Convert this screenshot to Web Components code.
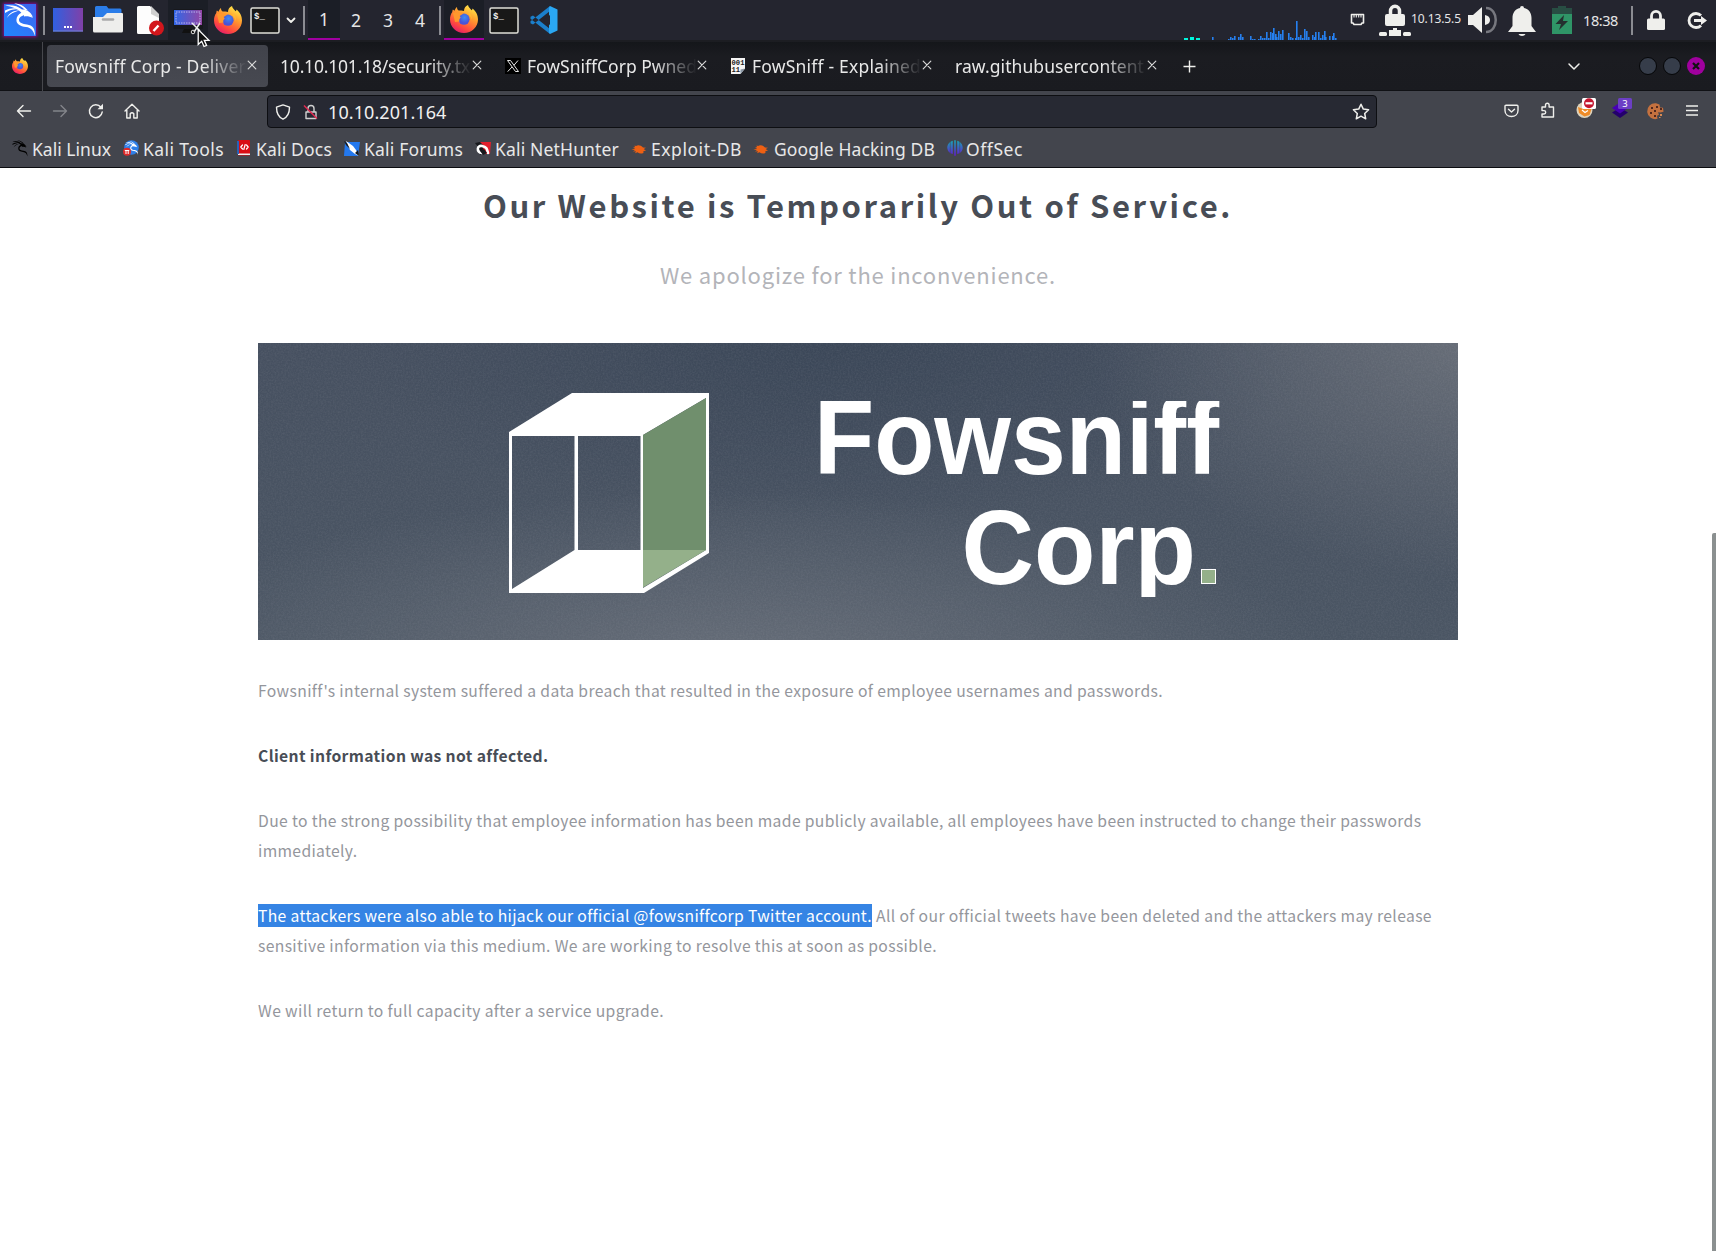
<!DOCTYPE html>
<html lang="en">
<head>
<meta charset="utf-8">
<title>Fowsniff Corp - Delivering Solutions</title>
<style>
html,body{margin:0;height:100%;overflow:hidden;background:#fff}
</style>
</head>
<body>
<desktop-screen></desktop-screen>
<script>
const UI = '"Noto Sans","Open Sans",sans-serif';
const define = (name, html) => customElements.define(name, class extends HTMLElement {
  constructor(){ super(); this.attachShadow({mode:'open'}).innerHTML = html; }
});

/* Single line of text whose letter spacing is set so that it fills its w attribute */
customElements.define('fit-text', class extends HTMLElement {
  constructor(){
    super();
    this.attachShadow({mode:'open'}).innerHTML =
      '<style>:host{display:block;flex:none;white-space:pre}span{display:inline-block;font-kerning:normal}</style><span><slot></slot></span>';
  }
  connectedCallback(){
    const w = +this.getAttribute('w'), s = this.shadowRoot.querySelector('span');
    this.style.width = w + 'px';
    requestAnimationFrame(() => this.fit(w, s));
    this.fit(w, s);
  }
  fit(w, s){
    s.style.letterSpacing = '0.001px';
    const n = this.textContent.length, nat = s.getBoundingClientRect().width;
    if (nat) s.style.letterSpacing = ((w - nat) / n).toFixed(4) + 'px';
  }
});

const firefox = `<defs><linearGradient id="a" x1=".8" y1="0" x2=".25" y2="1"><stop offset="0" stop-color="#fff14a"/><stop offset=".4" stop-color="#ff9a2e"/><stop offset=".75" stop-color="#ff4a3f"/><stop offset="1" stop-color="#e2196e"/></linearGradient><radialGradient id="b" cx=".55" cy=".35"><stop offset="0" stop-color="#3b8df5"/><stop offset="1" stop-color="#4a53d6"/></radialGradient></defs>
<path fill="url(#a)" d="M18 0c.3 2.3 2.3 3.400 3.600 5.300.6-.2.900-1 .8-1.700C26 6 28 10.500 28 14.500 28 22 21.800 28 14 28S0 22 0 14.500C0 11.500.8 9 2.300 7c0-.8.1-1.700.6-2.500l1.600 1.300C5 4.500 5.700 3 7 2c-.1 1.700.7 2.900 1.700 3.600 2 .1 3.500-.1 5.300.4C14 3.300 15.500.8 18 0z"/>
<circle cx="14" cy="14.200" r="5.600" fill="url(#b)"/><path fill="#ff982d" d="M3 8c2-1.200 4-1 5.700-.2 1.600-.7 3.600-.3 4.600.9-1 .9-2.800 1.300-3.600 2.300l1 1.800c-1.500 1-1.700 2.200-1.200 3.600L5 17z"/><path fill="#ffbd34" d="M18.500 7c2.600 1.800 4 5 3.400 8.500-.2-2-1.200-4-3-5.500z" opacity=".85"/>`;
const term = `<rect x="1" y="1" width="28" height="25" rx="1.500" fill="#181818" stroke="#deded8" stroke-width="1.500"/><text x="4" y="12" font-family="Liberation Mono,monospace" font-weight="bold" font-size="9" fill="#eee">$_</text>`;
const kaliDragon = `<g fill="#fff"><path d="M1 2.500C8 1.500 14 3 18 6.500c4-.2 8.500 1.800 11 7.500-3-2-5.500-2.500-8-2-3.500.6-6 2.400-6 5 0 3 3.500 3.800 8 4.500 5.500.8 8.500 4 7.800 11.500-1.300-5.500-3.600-8.300-8.800-9-6-.8-9.600-2.800-9.600-7 0-3.400 2-5.700 5-7.300C13.500 5.500 8 3.800 1 2.500z"/><path d="M1 7.500C6 5 10 4.500 16 6c-6 0-10 .8-15 4zM3 15c2-5 6-7.600 13-7.500C9.500 9 6 11 3 15zM10 .5c6 0 10 2.500 14 7l-3-.5C18 3.500 14 1.800 10 .500z"/><path d="M20 11c3.500-.6 7 .6 9 4-3-1.500-6-2-9-1.500z"/></g>`;
const bug = `<path fill="#ee6013" d="M3.500 4.500l1.600.5C6.800 3.700 10 4.200 12 6.500l3 .3-2.300 1.200 2.300 1.700-2.600.2c.3 1.500.2 2-.6 2.300-1.700.6-3.700.3-5.300-.9l-2.500 1 1-2-3 .3 2-1.500L.5 8.500l3.500-1L2 6l2 .2z"/>`;
const L = (s, w=1.3) => `fill="none" stroke="${s}" stroke-width="${w}" stroke-linecap="round" stroke-linejoin="round"`;
const W = '#efefec';
const icons = {
  kali:[40,40,`<defs><linearGradient id="g" x1="0" y1="1" x2="1" y2="0"><stop offset="0" stop-color="#1f86ff"/><stop offset="1" stop-color="#3f63f0"/></linearGradient><filter id="f" x="-.3" y="-.3" width="1.600" height="1.600"><feGaussianBlur stdDeviation="1.600"/></filter></defs><rect x="3" y="3" width="34" height="34" fill="#a800b4" opacity=".75" filter="url(#f)"/><rect x="4" y="4" width="32" height="32" fill="url(#g)"/><g transform="translate(4 3)">${kaliDragon}</g>`],
  desk:[30,24,`<defs><linearGradient id="g"><stop stop-color="#3060e0"/><stop offset="1" stop-color="#8040a8"/></linearGradient></defs><rect width="30" height="23.500" fill="url(#g)"/><path d="M0 23h30" stroke="#6f86d8"/><path fill="#fff" d="M11 18h2v2h-2zM14 18h2v2h-2zM17 18h2v2h-2z"/>`],
  folder:[30,28,`<path fill="#2b7de9" d="M2 1.500A1.500 1.500 0 013.500 0h10l2 2.500H27A1.500 1.500 0 0128.500 4v8H2z"/><path fill="#eeeeec" d="M0 11h10l4-4h15a1 1 0 011 1v17a1.500 1.500 0 01-1.500 1.500h-27A1.500 1.500 0 010 25z"/><path stroke="#aaa" stroke-width="2.500" stroke-linecap="round" d="M10 13.500h10"/>`],
  doc:[28,30,`<path fill="#fdfdfd" d="M0 1.500A1.500 1.500 0 011.500 0H13l9 9v17.500a1.500 1.500 0 01-1.500 1.500h-19A1.500 1.500 0 010 26.500z"/><path fill="#cfcfcf" d="M14 0l8 8v4l-8-4z"/><circle cx="19.500" cy="22" r="7.500" fill="#d3161c"/><path d="M16.500 25l5-5.500" stroke="#fff" stroke-width="2.400"/>`],
  snip:[32,30,`<defs><linearGradient id="g"><stop stop-color="#3068e8"/><stop offset="1" stop-color="#9446a4"/></linearGradient></defs><rect x=".5" y="2" width="29.500" height="20" rx="1" fill="#17181c"/><rect x="1" y="3" width="28" height="15" fill="url(#g)"/><rect x="3" y="5" width="24" height="11" fill="none" stroke="#b9b3ef" stroke-dasharray="1.500 1"/><path fill="#111" d="M11 22h8l2 4H9z"/><path d="M19 16l8 8M27 16l-6 9" stroke="#eee" stroke-width="1.500"/><circle cx="20" cy="25" r="1.800" fill="none" stroke="#ddd"/>`],
  firefox:[28,28,firefox], ffsmall:[16,16,`<g transform="scale(.571)">${firefox}</g>`],
  term:[30,27,term],
  chev:[10,7,`<path ${L(W,1.8)} d="M1.500 1.500L5 5l3.500-3.500"/>`],
  chevw:[14,9,`<path ${L(W,1.5)} d="M2 2l5 5 5-5"/>`],
  code:[28,28,`<path fill="#1b7fcb" d="M20 5L3 18.500l-2.500-1.200v-2L20 0zM20 23L3 9.500.5 10.700v2L20 28z"/><path fill="#2aa7f3" d="M20 0l7.500 3.500v21L20 28l-1-1.500v-25z"/><path fill="#24252f" d="M20 9v10l-6.800-5z"/>`],
  graph:[152,26,''],
  eth:[15,13,`<path ${L(W,1.600)} d="M1.500 1.500h12v8.500h-1.500l-1 1.500H4L3 10H1.500z"/><path stroke="${W}" stroke-width="1.100" d="M4 2v2.500M6.300 2v2.500M8.700 2v2.500M11 2v2.500"/>`],
  vpn:[32,32,`<rect x="6" y="10" width="20" height="12" rx="2" fill="${W}"/><path fill="none" stroke="${W}" stroke-width="3.500" d="M11.500 11V7a4.500 4.800 0 019 0v4"/><rect y="28" width="8" height="4" rx="1.500" fill="${W}"/><rect x="24" y="28" width="8" height="4" rx="1.500" fill="${W}"/><path fill="${W}" d="M14 24h4v2h4v6H10v-6h4z"/>`],
  speaker:[30,28,`<path fill="${W}" d="M0 9h5L14 1v26l-9-8H0z"/><path fill="${W}" d="M17 9q5 1 5 5t-5 5z"/><path fill="none" stroke="#77787f" stroke-width="2.500" d="M18 2c13 0 13 24 0 24"/>`],
  bell:[28,30,`<path fill="${W}" d="M12 2a2 2 0 014 0c5 1 7.500 5 7.500 10v8L28 26H0l4.500-6v-8C4.500 7 7 3 12 2zM10.500 28h7c-1 2.500-6 2.500-7 0z"/>`],
  battery:[20,28,`<path fill="#284d43" d="M6 0h8v2h6v7H0V2h6z"/><path fill="#2f9567" d="M0 8h20v20H0z"/><path fill="#24302f" d="M12 9L3.500 18H9l-2 6 9-9h-5z"/>`],
  lock:[18,20,`<rect y="8.500" width="18" height="11.500" rx="1.500" fill="${W}"/><path fill="none" stroke="${W}" stroke-width="2.800" d="M4.500 10V6a4.500 4.600 0 019 0v4"/>`],
  logout:[20,17,`<path fill="none" stroke="${W}" stroke-width="2.800" d="M14 3.600A7 7 0 1014 13.400"/><path fill="${W}" d="M7 7h7V4l6 4.500-6 4.500v-3H7z"/>`],
  x:[10,10,`<path ${L('#d8d8d8',1.2)} d="M1.200 1.200l7.600 7.600M8.800 1.200L1.200 8.800"/>`],
  plus:[13,13,`<path stroke="${W}" stroke-width="1.400" d="M6.500.5v12M.5 6.500h12"/>`],
  X:[16,16,`<rect width="16" height="16"/><path fill="none" stroke="#fff" stroke-width=".9" d="M2.500 2.500h3l8 11h-3zM13 2.500L9 7.200M7 9l-4.300 4.600"/>`],
  bin:[16,16,`<path fill="#f5f5f5" d="M1 0h14v10.500L10.500 16H1z"/><path fill="#8b97a5" d="M15 10.500L10.500 16v-4.500z"/><g font-family="Liberation Mono,monospace" font-weight="bold" font-size="7.200" fill="#222"><text x="1.500" y="6.800">001</text><text x="1.500" y="13.500">11</text></g>`],
  back:[16,14,`<path ${L(W,1.4)} d="M14.500 7H1.500M7 1.500L1.500 7 7 12.500"/>`],
  fwd:[16,14,`<path ${L('#83858a',1.4)} d="M1.500 7h13M9 1.500L14.500 7 9 12.500"/>`],
  reload:[16,16,`<path ${L(W,1.5)} d="M14.200 9A6.400 6.400 0 1112.900 4.300"/><path fill="${W}" d="M15 .8V6.300H9.500z"/>`],
  home:[16,16,`<path ${L(W,1.4)} d="M1 8L8 1.200 15 8M2.800 7v8h3.400v-4.300q1.800-2 3.600 0V15h3.400V7"/>`],
  shield:[16,16,`<path ${L(W,1.4)} d="M8 .9l6.500 2.300C14.500 9 12.800 13 8 15.200 3.200 13 1.500 9 1.500 3.200z"/>`],
  nolock:[16,16,`<path ${L('#d0d0d0',1.4)} d="M3 8h10v6.500H3zM5 8V4.500a3 3 0 016 0V8"/><path stroke="#e22850" stroke-width="1.500" d="M1 1.500l13 13"/>`],
  star:[18,17,`<path ${L(W,1.5)} d="M9 1.200l2.300 4.900 5.300.7-3.900 3.700 1 5.300L9 13.200l-4.700 2.600 1-5.300L1.400 6.800l5.300-.7z"/>`],
  pocket:[15,14,`<path ${L(W,1.4)} d="M2 1.200h11q1 0 1 1V6.500c0 8-13 8-13 0V2.200q0-1 1-1z"/><path ${L(W,1.4)} d="M4.500 5.200l3 2.800 3-2.800"/>`],
  puzzle:[15,16,`<path ${L(W,1.4)} d="M2 5h3.500V3a1.800 1.800 0 013.600 0v2H13.500v10H2v-3h2a1.600 1.600 0 000-3.400H2z"/>`],
  fox:[20,20,`<circle cx="8.500" cy="12" r="8" fill="#ddd3bd"/><path fill="#ef8b27" d="M2 9l4 1.500L9.500 8l6 3-2 6-5 1.500L3 15z"/><path stroke="#fff" stroke-width="1.200" fill="none" d="M6 12l3 2.500 3-2"/><rect x="6" width="14" height="11" rx="1.500" fill="#fff"/><circle cx="13" cy="5.300" r="5" fill="#c41730"/><rect x="9.500" y="4.200" width="7" height="2.200" fill="#fff"/>`],
  layers:[20,20,`<path fill="#24006c" d="M0 14.500L8 20l8-5.500-8-5z"/><path fill="#4700b5" d="M0 10l8-5.500 8 5.500-8 5.500z"/><rect x="6" width="14" height="11" rx="1.500" fill="#6c3fc5"/><text x="10.200" y="9" font-family="Noto Sans,sans-serif" font-size="9.500" fill="#fff">3</text>`],
  cookie:[16,16,`<path fill="#c4713f" d="M8 .2a8 8 0 101.500 15.600l-.5-3 2-1-1-2.600 2.500.3 3-.8-.5-4-3-.2-.5-3z"/><path fill="#52291e" d="M3 4h2v2H3zM8 3h2v2H8zM6 7h2v2H6zM2 9h2v2H2zM6 12h2v2H6zM12 5h2v2h-2z"/><path fill="#d98a52" d="M12 11h2v2h-2zM11 14h1.500v1H11z"/>`],
  menu:[12,11,`<path stroke="${W}" stroke-width="1.300" d="M0 1h12M0 5.500h12M0 10h12"/>`],
  bKali:[17,16,`<g transform="scale(.5)" style="filter:brightness(0)">${kaliDragon}</g>`],
  bTools:[16,16,`<circle cx="8.500" cy="7.500" r="7.300" fill="#2e7fe8"/><g transform="translate(2 1) scale(.42)">${kaliDragon}</g><circle cx="4" cy="11.800" r="4" fill="#e02a2a"/><path fill="#fff" d="M1.800 10h4.400v1H5.700v3h-1v-3H3.500v3h-1v-3h-.7z"/>`],
  bDocs:[14,16,`<rect x="1" width="12" height="15.500" rx="1" fill="#d90d14"/><rect x="1" y="13.500" width="12" height="1.500" fill="#eee"/><path fill="#2a60b8" d="M0 1h2v13H0z"/><path ${L('#fff',1.2)} d="M5.500 5L3.800 7l1.700 2M9.500 5l1.700 2-1.700 2M8.200 4.500L6.800 9.500"/>`],
  bForums:[16,15,`<path fill="#2378ee" d="M1 1h15l-2 14H0z"/><path fill="#fff" d="M2 0l7 5 3 4 3 6-4-2-5-4-2-4z"/><path fill="#15181e" d="M0 0l3 2 3 6-4-4zM11 12l4 3-1-6z"/>`],
  bHunter:[16,15,`<path fill="#e21f2d" d="M5 1h11l-1 12H5z"/><path fill="#16181c" d="M0 2l5-1 4 4-3 9-4-3 2-4z"/><path ${L('#fff',2.6)} d="M7 12C1 11 2 4 7 5s5 3 6 7"/><path fill="#16181c" d="M5 10l4-2 3 4-4 2z"/>`],
  bug:[16,15,bug],
  offsec:[16,16,`<defs><linearGradient id="g" x2="0" y2="1"><stop stop-color="#16a8b4"/><stop offset="1" stop-color="#6418d0"/></linearGradient></defs><path fill="url(#g)" d="M7.200.2v15.600h1.600V.2zM5.800.7C2 2 0 5 .3 8.200.6 11 2.500 13.500 5.800 14zM10.200.7C14 2 16 5 15.700 8.200 15.400 11 13.500 13.500 10.200 14z"/><path d="M3.300 2v11M12.700 2v11" stroke="#43454d" stroke-width=".5"/>`],
  cursor:[14,20,`<path d="M1.200 1.500v15l3.500-3.200 2.300 5.200 2.600-1.100-2.300-5.100h4.700z" fill="#111" stroke="#fff" stroke-width="1.300"/>`]
};
/* CPU activity bars: [x, height] */
const bars = [[28,3],[44,1],[46,3],[48,2],[50,4],[54,3],[56,6],[58,3],[66,4],[68,1],[70,1],[74,1],[76,4],[78,2],[80,2],[82,8],[84,2],[86,8],[88,7],[89,12],[91,6],[92,3],[94,9],[96,6],[98,10],[104,7],[106,3],[108,2],[111,2],[112,19],[114,3],[116,5],[118,2],[120,11],[122,9],[124,3],[128,5],[130,3],[131,8],[134,8],[136,2],[138,5],[140,9],[141,3],[145,4],[148,4],[149,7],[151,2]];
icons.graph[2] = '<path fill="#00f5dc" d="M0 24h4v2H0zM6 23h4v3H6zM12 24h4v2h-4z"/><path fill="#2680f0" d="' + bars.map(([x,h]) => `M${x} ${26-h}h1.600v${h}h-1.600z`).join('') + '"/>';

customElements.define('ui-icon', class extends HTMLElement {
  constructor(){ super(); this.attachShadow({mode:'open'}); }
  connectedCallback(){
    const [w,h,m] = icons[this.getAttribute('name')];
    this.shadowRoot.innerHTML = `<style>:host{display:block;flex:none;width:${w}px;height:${h}px}svg{display:block;overflow:visible}</style><svg width="${w}" height="${h}" viewBox="0 0 ${w} ${h}" aria-hidden="true">${m}</svg>`;
  }
});
const ic = (n, ml=0, mt=0) => `<ui-icon name="${n}" style="margin-left:${ml}px;margin-top:${mt}px"></ui-icon>`;
const ft = (t, w, ml=0) => `<fit-text w="${w}" style="margin-left:${ml}px">${t}</fit-text>`;

define('task-panel', `<style>
:host{display:flex;box-sizing:border-box;height:42px;background:#24252f;border-bottom:2px solid #1c1d22;justify-content:space-between;font:17.5px/40px ${UI};color:#e6e6e6}
div{display:flex;height:40px;align-items:center}
i{width:2px;height:29px;background:#8b8c92;flex:none}
.cell{justify-content:center;box-sizing:border-box;flex:none}
.on{background:#1b1e26}
.live{border-bottom:2px solid #a000a0}
.ip{font-size:12px;margin-top:-2px}.clock{font-size:14.500px;margin-top:-1px}
</style>
<div>${ic('kali')}<i style="margin-left:3px"></i>${ic('desk',8)}${ic('folder',10)}${ic('doc',14,1)}
<div class="cell on" style="width:40px;margin-left:3px">${ic('snip',1,4)}</div>${ic('firefox',6)}${ic('term',8)}${ic('chev',6)}
<i style="margin-left:7px"></i><div class="cell on live" style="width:32px;margin-left:3px">1</div>
<div class="cell" style="width:32px">2</div><div class="cell" style="width:32px">3</div><div class="cell" style="width:32px">4</div>
<i style="margin-left:3px"></i><div class="cell on live" style="width:40px;margin-left:3px">${ic('firefox')}</div>${ic('term',5)}${ic('code',11)}</div>
<div>${ic('graph',0,14)}${ic('eth',14,-2)}${ic('vpn',14)}<span class="ip">${ft('10.13.5.5',50)}</span>${ic('speaker',7)}${ic('bell',10,2)}${ic('battery',16)}<span class="clock">${ft('18:38',35,11)}</span><i style="margin-left:13px"></i>${ic('lock',14)}${ic('logout',22)}<b style="width:9px"></b></div>`);

customElements.define('browser-tab', class extends HTMLElement {
  constructor(){ super(); this.attachShadow({mode:'open'}); }
  connectedCallback(){
    const icon = this.getAttribute('icon');
    this.shadowRoot.innerHTML = `<style>
:host{display:flex;flex:none;box-sizing:border-box;width:221px;height:42px;margin-right:4px;padding:0 11px 0 8px;align-items:center;border-radius:4px}
:host([active]){background:linear-gradient(#41434b,#474951)}
.t{flex:1;height:42px;overflow:hidden;line-height:43px;-webkit-mask:linear-gradient(90deg,#000 calc(100% - 44px),transparent)}
</style>${icon ? ic(icon) + '<b style="width:6px"></b>' : ''}<div class="t"><fit-text w="${this.getAttribute('w')}">${this.getAttribute('label')}</fit-text></div>${ic('x',0,-2)}`;
  }
});
define('tab-strip', `<style>
:host{display:flex;box-sizing:border-box;height:49px;padding:0 11px 0 12px;align-items:center;background:linear-gradient(#14161a,#1b1c21 30%,#1a1b20);border-bottom:1px solid #101115;font:17.5px ${UI};color:#e8e8e8}
i{width:1px;height:49px;background:#47484d;margin:0 4px 0 14px}
s{flex:1}
.w{box-sizing:border-box;width:18px;height:18px;border-radius:50%;background:#363d4a;border:1px solid #050608;margin-left:6px}
.c{display:flex;align-items:center;justify-content:center;background:#a0009e;border:0}
</style>${ic('ffsmall')}<i></i>
<browser-tab active label="Fowsniff Corp - Deliver" w="191"></browser-tab>
<browser-tab label="10.10.101.18/security.tx" w="190"></browser-tab>
<browser-tab icon="X" label="FowSniffCorp Pwned" w="170"></browser-tab>
<browser-tab icon="bin" label="FowSniff - Explained" w="169"></browser-tab>
<browser-tab label="raw.githubusercontent" w="189"></browser-tab>
${ic('plus',11)}<s></s>${ic('chevw')}<span class="w" style="margin-left:58px"></span><span class="w"></span><span class="w c"><svg width="8" height="8"><path d="M1 1l6 6M7 1L1 7" stroke="#111" stroke-width="2.200"/></svg></span>`);

define('nav-bar', `<style>
:host{display:flex;box-sizing:border-box;height:39px;padding:0 18px 0 16px;align-items:center;background:#43454d;font:18px/30px ${UI};color:#f0f0f0}
.url{display:flex;align-items:center;box-sizing:border-box;width:1110px;height:33px;margin:2px 0 0 127px;padding:0 6px 0 7px;background:#272933;border:1px solid #0d0e12;border-radius:4px}
s{flex:1}
</style>${ic('back')}${ic('fwd',20)}${ic('reload',20)}${ic('home',20)}
<div class="url">${ic('shield')}${ic('nolock',12)}${ft('10.10.201.164',118.5,9)}<s></s>${ic('star')}</div>
<s></s>${ic('pocket')}${ic('puzzle',21,-1)}${ic('fox',21,-6)}${ic('layers',16,-6)}${ic('cookie',16,1)}${ic('menu',22)}`);

const marks = [['bKali','Kali Linux',12,3,79],['bTools','Kali Tools',12,4,81],['bDocs','Kali Docs',13,5,76],['bForums','Kali Forums',12,4,99],['bHunter','Kali NetHunter',12,4,124],['bug','Exploit-DB',12,4,91],['bug','Google Hacking DB',11,5,161],['offsec','OffSec',12,3,57]];
define('bookmarks-bar', `<style>
:host{display:flex;box-sizing:border-box;height:38px;align-items:center;background:#43454d;border-bottom:1px solid #0c0d11;font:17.5px/38px ${UI};color:#e8e8e8}
a{display:flex;align-items:center;flex:none}
</style>${marks.map(([i,t,m,g,w]) => `<a>${ic(i,m,-1)}${ft(t,w,g)}</a>`).join('')}`);

define('corp-banner', `<style>
:host{display:block;width:1200px;height:297px;background:radial-gradient(ellipse 34% 85% at 103% -5%,rgba(115,120,128,.8),rgba(100,105,115,0)),radial-gradient(ellipse 50% 58% at 39% 108%,rgba(112,118,128,.75),rgba(95,102,112,0)),radial-gradient(ellipse 40% 60% at 48% 0,#3b4758,rgba(64,76,92,0)),linear-gradient(#465060,#4a5563)}
svg{display:block}
</style><svg width="1200" height="297" viewBox="258 343 1200 297">
<defs><clipPath id="c"><rect x="800" y="401" width="430" height="196"/></clipPath><filter id="n" x="0" y="0" width="1" height="1"><feTurbulence type="fractalNoise" baseFrequency=".6" numOctaves="2" seed="3"/><feColorMatrix values="0 0 0 0 .5  0 0 0 0 .5  0 0 0 0 .55  .5 0 0 0 -.16"/></filter></defs>
<rect x="258" y="343" width="1200" height="297" filter="url(#n)" opacity=".35"/>
<path fill="#fff" fill-rule="evenodd" d="M509 432L572 393H709V553L644 593H509zM512 436V589L574.500 550V436zM578 436V550H640.500V436zM643 435V550 588L706 550V398z"/>
<path fill="#708f6d" d="M643 435L706 398V550H643z"/><path fill="#94b08a" d="M643 550H706L643 587.500z"/>
<g clip-path="url(#c)" font-family="Liberation Sans,Arial,sans-serif" font-weight="bold" font-size="105" fill="#fff"><text x="814" y="474" textLength="405" lengthAdjust="spacingAndGlyphs">Fowsniff</text><text x="961.500" y="584" textLength="234.500" lengthAdjust="spacingAndGlyphs">Corp</text></g>
<rect x="1201.500" y="569.500" width="14" height="14" fill="#94b08a" stroke="#fff"/></svg>`);

define('page-body', `<style>
:host{display:flex;flex:1;position:relative;flex-direction:column;align-items:center;padding-top:17px;background:#fff;font:15.700px/30px "Noto Sans CJK SC","Noto Sans",sans-serif;color:#94969c}
h1{margin:0;font-size:31px;line-height:40px;color:#484d56;font-weight:700}
h2{margin:34px 0 0;font-size:22px;line-height:30px;font-weight:400;color:#b3b4b9}
corp-banner{margin-top:54px}
article{width:1200px;padding-top:36px}
p{margin:0 0 35px}
p b{color:#484d56}
.row{display:flex}
mark{background:linear-gradient(#3584e4,#3584e4) 0 3px/100% 23px no-repeat;color:#fff}
aside{position:absolute;right:0;top:365px;bottom:0;width:4px;background:#8b9090;border-radius:2px 0 0 0}
</style>
<h1>${ft('Our Website is Temporarily Out of Service.',750)}</h1>
<h2>${ft('We apologize for the inconvenience.',396)}</h2>
<corp-banner></corp-banner>
<article>
<p>${ft("Fowsniff's internal system suffered a data breach that resulted in the exposure of employee usernames and passwords.",905)}</p>
<p><b>${ft('Client information was not affected.',290.5)}</b></p>
<p>${ft('Due to the strong possibility that employee information has been made publicly available, all employees have been instructed to change their passwords',1163.5)}${ft('immediately.',99.5)}</p>
<p><span class="row"><mark>${ft('The attackers were also able to hijack our official @fowsniffcorp Twitter account.',614)}</mark>${ft('All of our official tweets have been deleted and the attackers may release',556,4)}</span>${ft('sensitive information via this medium. We are working to resolve this at soon as possible.',679)}</p>
<p>${ft('We will return to full capacity after a service upgrade.',406)}</p>
</article><aside></aside>`);

define('desktop-screen', `<style>
:host{display:flex;flex-direction:column;width:1716px;height:1251px;position:relative;overflow:hidden}
ui-icon{position:absolute;left:197px;top:28px;z-index:2}
</style><task-panel></task-panel><tab-strip></tab-strip><nav-bar></nav-bar><bookmarks-bar></bookmarks-bar><page-body></page-body><ui-icon name="cursor"></ui-icon>`);
</script>
</body>
</html>
